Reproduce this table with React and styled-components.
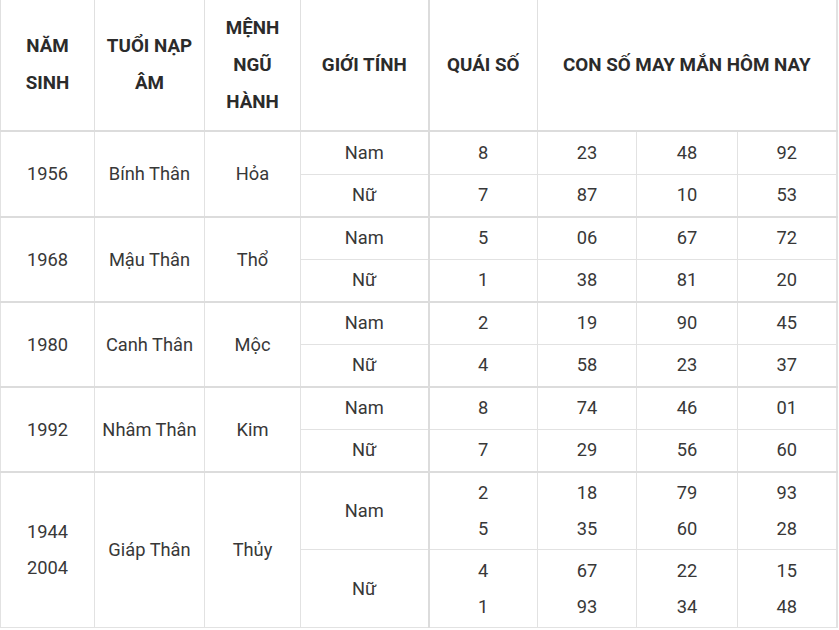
import React from "react";
import styled, { createGlobalStyle } from "styled-components";

const Global = createGlobalStyle`
  html, body { margin: 0; padding: 0; background: #fff; }
  body { font-family: Roboto, "Noto Sans", Arial, sans-serif; }
`;

const Table = styled.table`
  width: 836px;
  table-layout: fixed;
  border-collapse: collapse;
  font-family: Roboto, "Noto Sans", Arial, sans-serif;
  font-size: 18.3px;
  color: #383838;
  border-right: 2px solid #e2e2e2;
  border-left: 1px solid #e2e2e2;
`;

const Th = styled.th`
  height: 130px;
  padding: 0 4px;
  font-size: 18.8px;
  font-weight: 700;
  color: #2b2b2b;
  line-height: 37px;
  text-align: center;
  vertical-align: middle;
  border: 1px solid #e0e0e0;
  border-top: none;
  border-bottom: 2px solid #dcdcdc;
  ${(p) => (p.$thick ? "border-left: 2px solid #dcdcdc;" : "")}
`;

const Row = styled.tr`
  height: ${(p) => p.$h}px;
`;

const Td = styled.td`
  padding: 2px 4px;
  line-height: 36px;
  text-align: center;
  vertical-align: middle;
  border: 1px solid #e2e2e2;
  ${(p) => (p.$thick ? "border-left: 2px solid #dcdcdc;" : "")}
  ${(p) => (p.$groupTop ? "border-top: 2px solid #dcdcdc;" : "")}
`;

const widths = [94, 110, 96, 128, 109, 99, 101, 99];

const groups = [
  {
    year: ["1956"],
    tuoi: "Bính Thân",
    menh: "Hỏa",
    rows: [
      { g: "Nam", q: ["8"], n: [["23", "48", "92"]] },
      { g: "Nữ", q: ["7"], n: [["87", "10", "53"]] },
    ],
  },
  {
    year: ["1968"],
    tuoi: "Mậu Thân",
    menh: "Thổ",
    rows: [
      { g: "Nam", q: ["5"], n: [["06", "67", "72"]] },
      { g: "Nữ", q: ["1"], n: [["38", "81", "20"]] },
    ],
  },
  {
    year: ["1980"],
    tuoi: "Canh Thân",
    menh: "Mộc",
    rows: [
      { g: "Nam", q: ["2"], n: [["19", "90", "45"]] },
      { g: "Nữ", q: ["4"], n: [["58", "23", "37"]] },
    ],
  },
  {
    year: ["1992"],
    tuoi: "Nhâm Thân",
    menh: "Kim",
    rows: [
      { g: "Nam", q: ["8"], n: [["74", "46", "01"]] },
      { g: "Nữ", q: ["7"], n: [["29", "56", "60"]] },
    ],
  },
  {
    year: ["1944", "2004"],
    tuoi: "Giáp Thân",
    menh: "Thủy",
    rows: [
      { g: "Nam", q: ["2", "5"], n: [["18", "79", "93"], ["35", "60", "28"]] },
      { g: "Nữ", q: ["4", "1"], n: [["67", "22", "15"], ["93", "34", "48"]] },
    ],
  },
];

const Lines = ({ items }) =>
  items.map((t, i) => (
    <React.Fragment key={i}>
      {i > 0 && <br />}
      {t}
    </React.Fragment>
  ));

export default function App() {
  return (
    <>
      <Global />
      <Table>
        <colgroup>
          {widths.map((w, i) => (
            <col key={i} style={{ width: w }} />
          ))}
        </colgroup>
        <thead>
          <tr>
            <Th>NĂM<br />SINH</Th>
            <Th>TUỔI NẠP<br />ÂM</Th>
            <Th>MỆNH<br />NGŨ<br />HÀNH</Th>
            <Th>GIỚI TÍNH</Th>
            <Th $thick>QUÁI SỐ</Th>
            <Th colSpan={3}>CON SỐ MAY MẮN HÔM NAY</Th>
          </tr>
        </thead>
        <tbody>
          {groups.map((grp, gi) =>
            grp.rows.map((r, ri) => {
              const multi = r.q.length > 1;
              const top = ri === 0 && gi > 0;
              const h = multi ? (ri === 0 ? 77 : 78) : ri === 0 ? (gi === 0 ? 43 : 42) : 43;
              return (
                <Row key={`${gi}-${ri}`} $h={h}>
                  {ri === 0 && (
                    <>
                      <Td rowSpan={2} $groupTop={top}>
                        <Lines items={grp.year} />
                      </Td>
                      <Td rowSpan={2} $groupTop={top}>{grp.tuoi}</Td>
                      <Td rowSpan={2} $groupTop={top}>{grp.menh}</Td>
                    </>
                  )}
                  <Td $groupTop={top}>{r.g}</Td>
                  <Td $thick $groupTop={top}>
                    <Lines items={r.q} />
                  </Td>
                  {[0, 1, 2].map((c) => (
                    <Td key={c} $groupTop={top}>
                      <Lines items={r.n.map((line) => line[c])} />
                    </Td>
                  ))}
                </Row>
              );
            })
          )}
        </tbody>
      </Table>
    </>
  );
}
